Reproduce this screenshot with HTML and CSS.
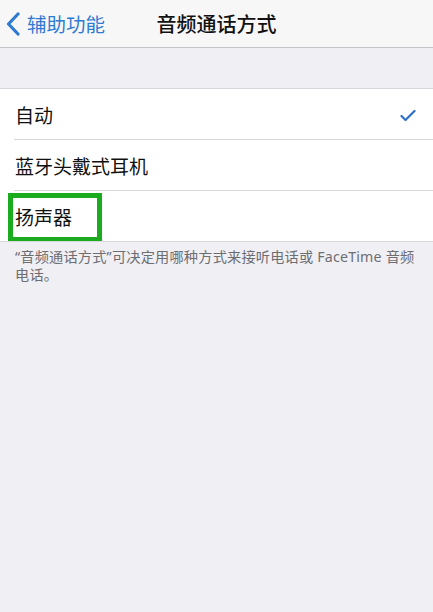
FILE: index.html
```html
<!DOCTYPE html>
<html lang="zh">
<head>
<meta charset="utf-8">
<link rel="stylesheet" href="styles.css">
</head>
<body>
<div class="nav">
  <div class="back">
    <svg class="chev" width="16" height="24" viewBox="0 0 16 24"><path d="M13 2 L3.5 12 L13 22" fill="none" stroke="#2f7bd0" stroke-width="3.2" stroke-linecap="round" stroke-linejoin="round"/></svg>
    <span>辅助功能</span>
  </div>
  <div class="title">音频通话方式</div>
</div>
<div class="gap"></div>
<div class="list">
  <div class="row"><span class="label">自动</span><svg class="check" width="16" height="13" viewBox="0 0 16 13"><path d="M1.5 7 L5.5 11 L14.5 2" fill="none" stroke="#2f6fc4" stroke-width="2.2" stroke-linecap="round" stroke-linejoin="round"/></svg></div>
  <div class="row"><span class="label">蓝牙头戴式耳机</span></div>
  <div class="row last"><span class="label">扬声器</span><div class="hl"></div></div>
</div>
<div class="footer">“音频通话方式”可决定用哪种方式来接听电话或 FaceTime 音频电话。</div>
</body>
</html>
```
FILE: styles.css
```css
html, body { margin: 0; padding: 0; }
body {
  width: 433px; height: 612px; background: #efeff4; overflow: hidden;
  font-family: "Noto Sans CJK SC", "Noto Sans", sans-serif;
}
.nav {
  position: relative; height: 47px; background: #f7f7f8;
  border-bottom: 1px solid #c4c4c8; display: flex; align-items: center;
}
.back { display: flex; align-items: center; padding-left: 5px; color: #2f7bd0; font-size: 19.5px; line-height: 1; }
.back span { margin-left: 6px; }
.title {
  position: absolute; left: 0; right: 0; top: 0; height: 47px; display: flex;
  align-items: center; justify-content: center; font-size: 20px; font-weight: 500; color: #111;
  pointer-events: none;
}
.gap { height: 40px; border-bottom: 1px solid #d6d6da; }
.list { background: #fff; }
.row {
  position: relative; height: 51px; display: flex; align-items: center;
  justify-content: space-between; padding: 0 17px 0 15px;
}
.row::after {
  content: ""; position: absolute; left: 14px; right: 0; bottom: 0; height: 1px; background: #d8d8dc;
}
.row.last::after { left: 0; }
.label { font-size: 19px; color: #111; }
.check { margin-top: 2px; }
.hl {
  position: absolute; left: 8px; top: 2px; width: 84px; height: 39px;
  border: 5px solid #1bab1f;
}
.footer {
  padding: 6px 12px 0 15px; font-size: 14.2px; line-height: 18px; color: #6d6d72;
  letter-spacing: 0.2px;
  font-family: "Noto Sans", "Noto Sans CJK SC", sans-serif;
}
```
